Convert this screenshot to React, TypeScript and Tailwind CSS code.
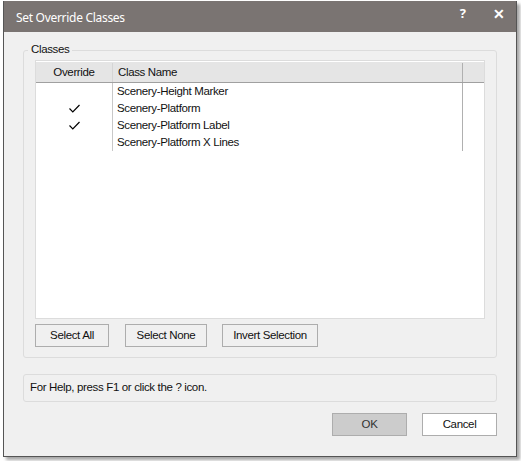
import React from "react";

const rows = [
  { name: "Scenery-Height Marker", checked: false },
  { name: "Scenery-Platform", checked: true },
  { name: "Scenery-Platform Label", checked: true },
  { name: "Scenery-Platform X Lines", checked: false },
];

function Check() {
  return (
    <svg width="11" height="9" viewBox="0 0 11 9" className="block">
      <path d="M0.5 4.5 L3.8 7.8 L10.5 1" fill="none" stroke="#000" strokeWidth="1.2" />
    </svg>
  );
}

export default function App() {
  const font = { fontFamily: '"Liberation Sans", Arial, sans-serif' };
  return (
    <div className="w-[521px] h-[461px] bg-white pl-[3px] pt-[1px]" style={font}>
      <div className="w-[514px] h-[456px] flex flex-col border border-t-0 border-[#555555] bg-[#f0f0f0] shadow-[3px_3px_3px_rgba(0,0,0,0.35)]">
        {/* Title bar */}
        <div className="h-[31px] bg-[#7a7472] flex items-center text-white shrink-0">
          <span className="ml-[12px] mt-[2px] text-[12px] tracking-[-0.3px]" style={{ fontFamily: '"Noto Sans", "Open Sans", sans-serif' }}>
            Set Override Classes
          </span>
          <span className="ml-auto mr-[27px] -mt-[6px] text-[13px] font-bold" style={{ fontFamily: '"Noto Sans", sans-serif' }}>?</span>
          <span className="mr-[11px] -mt-[6px] text-[14px] font-bold leading-none">✕</span>
        </div>

        {/* Body */}
        <div className="flex flex-col pl-[19px] pr-[19px] text-[11.5px] tracking-[-0.35px] text-[#111]">
          {/* Group box */}
          <div className="relative mt-[18px] h-[308px] border border-[#dcdcdc] rounded-[3px] flex flex-col px-[11px] pt-[9px]">
            <span className="absolute -top-[9px] left-[4px] bg-[#f0f0f0] px-[3px] leading-[14px]">Classes</span>
            {/* List */}
            <div className="h-[259px] border border-[#dcdcdc] bg-white flex flex-col">
              <div className="h-[21px] mt-[1px] pt-[1px] bg-[#e5e5e5] border-b border-[#a0a0a0] flex items-center shrink-0">
                <div className="w-[77px] h-full border-r border-[#d5d5d5] flex items-center justify-center">Override</div>
                <div className="w-[350px] h-full border-r border-[#b0b0b0] flex items-center pl-[5px]">Class Name</div>
              </div>
              {rows.map((r) => (
                <div key={r.name} className="h-[17px] flex items-center">
                  <div className="w-[77px] h-full border-r border-[#c8c8c8] flex items-center justify-center">
                    {r.checked ? <Check /> : null}
                  </div>
                  <div className="w-[350px] h-full border-r border-[#b0b0b0] flex items-center pl-[4px]">{r.name}</div>
                </div>
              ))}
            </div>
            {/* Buttons */}
            <div className="flex mt-[5px] gap-0">
              <button className="w-[74px] h-[23px] border border-[#adadad] bg-[#f0f0f0]">Select All</button>
              <button className="ml-[16px] w-[82px] h-[23px] border border-[#adadad] bg-[#f0f0f0]">Select None</button>
              <button className="ml-[15px] w-[96px] h-[23px] border border-[#adadad] bg-[#f0f0f0]">Invert Selection</button>
            </div>
          </div>

          {/* Help box */}
          <div className="mt-[16px] h-[28px] border border-[#dcdcdc] rounded-[3px] flex items-center pl-[6px]">
            For Help, press F1 or click the ? icon.
          </div>

          {/* OK / Cancel */}
          <div className="flex justify-end mt-[11px]">
            <button className="w-[75px] h-[23px] border border-[#adadad] bg-[#cccccc] text-[#333]">OK</button>
            <button className="ml-[15px] w-[75px] h-[23px] border border-[#adadad] bg-white">Cancel</button>
          </div>
        </div>
      </div>
    </div>
  );
}
